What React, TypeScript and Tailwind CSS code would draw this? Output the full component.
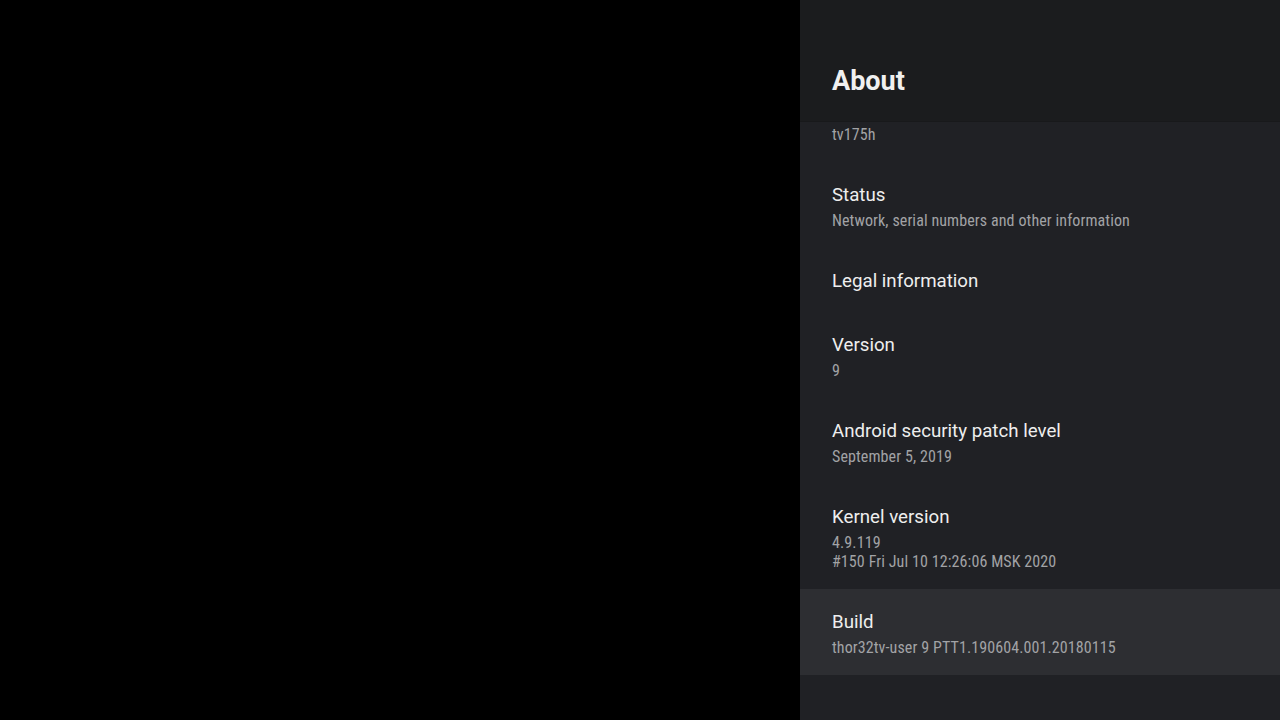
const items = [
  { title: 'Status', lines: ['Network, serial numbers and other information'] },
  { title: 'Legal information', lines: [] },
  { title: 'Version', lines: ['9'] },
  { title: 'Android security patch level', lines: ['September 5, 2019'] },
  { title: 'Kernel version', lines: ['4.9.119', '#150 Fri Jul 10 12:26:06 MSK 2020'] },
  { title: 'Build', lines: ['thor32tv-user 9 PTT1.190604.001.20180115'], selected: true },
]

const sub = "font-['Roboto_Condensed',Roboto,sans-serif] text-[16px] tracking-[0.1px] leading-[19px] text-[#a2a3a6]"

function Item({ title, lines, selected }: { title: string; lines: string[]; selected?: boolean }) {
  return (
    <div className={`pl-8 pt-[21px] ${lines.length ? 'pb-[18px]' : 'pb-[19px]'} ${selected ? 'bg-[#2d2e32]' : ''}`}>
      <div className="text-[18.7px] leading-[24px] text-[#eeeeee]">{title}</div>
      {lines.length > 0 && (
        <div className="mt-[4px]">
          {lines.map((l) => (
            <div key={l} className={sub}>{l}</div>
          ))}
        </div>
      )}
    </div>
  )
}

export default function App() {
  return (
    <div className="w-[1280px] h-[720px] flex bg-black overflow-hidden font-[Roboto,sans-serif]">
      <div className="flex-1" />
      <div className="w-[480px] bg-[#202125] flex flex-col">
        <div className="h-[122px] shrink-0 bg-[#1b1c1e] border-b border-[#18191b] pl-8 pt-[65px]">
          <h1 className="text-[27px] leading-[32px] font-bold text-[#f0f0f0]">About</h1>
        </div>
        <div className="h-[40px] shrink-0 pl-8 pt-[3px]">
          <div className={sub}>tv175h</div>
        </div>
        {items.map((it) => (
          <Item key={it.title} {...it} />
        ))}
      </div>
    </div>
  )
}
